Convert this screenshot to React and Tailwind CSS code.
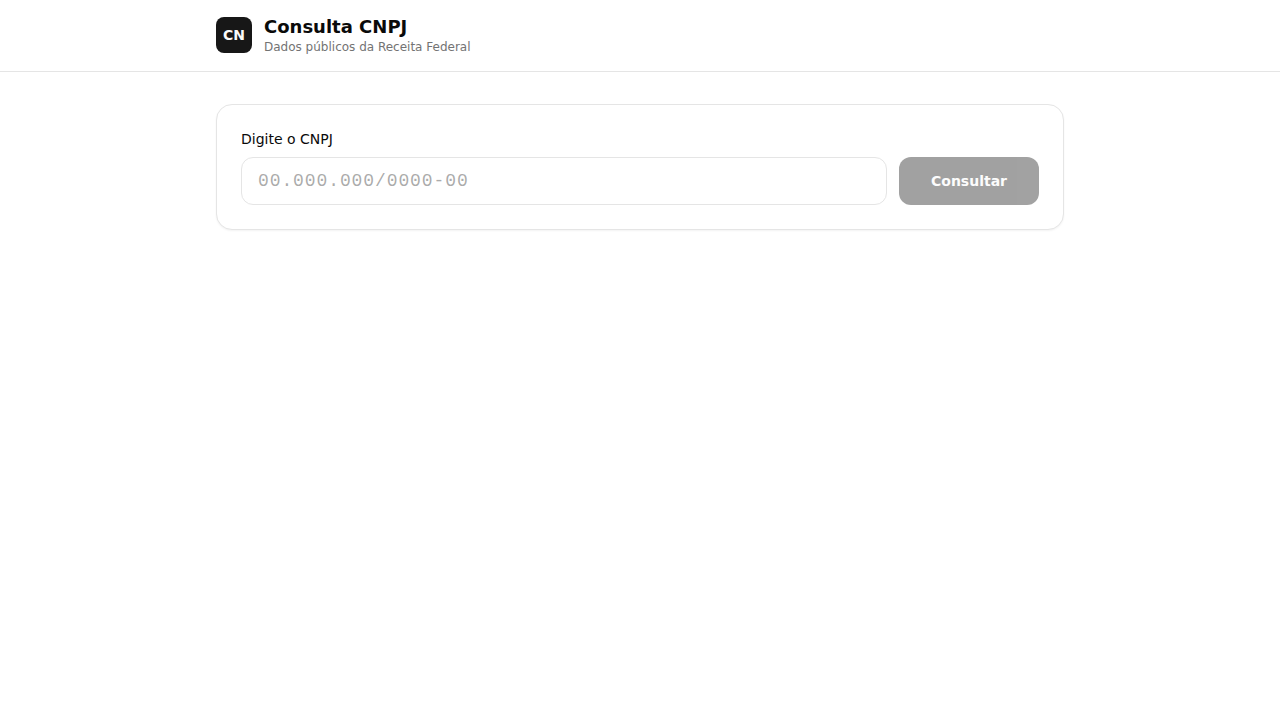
import { useState } from "react";

export default function App() {
  const [cnpj, setCnpj] = useState("");

  return (
    <div className="min-h-screen bg-white font-['DejaVu_Sans',sans-serif] text-neutral-950">
      <header className="border-b border-neutral-200">
        <div className="mx-auto flex max-w-4xl items-center gap-3 px-6 py-4">
          <div className="flex size-9 items-center justify-center rounded-lg bg-neutral-900 text-sm font-bold text-neutral-50">
            CN
          </div>
          <div>
            <h1 className="text-lg leading-tight font-bold">Consulta CNPJ</h1>
            <p className="text-xs text-neutral-500">Dados públicos da Receita Federal</p>
          </div>
        </div>
      </header>
      <main className="mx-auto max-w-4xl px-6 py-8">
        <form
          className="rounded-2xl border border-neutral-200 bg-white p-6 shadow-xs"
          onSubmit={(event) => event.preventDefault()}
        >
          <label htmlFor="cnpj" className="mb-2 block text-sm font-medium">
            Digite o CNPJ
          </label>
          <div className="flex gap-3">
            <input
              id="cnpj"
              type="text"
              inputMode="numeric"
              value={cnpj}
              onChange={(event) => setCnpj(event.target.value)}
              placeholder="00.000.000/0000-00"
              className="h-12 min-w-0 flex-1 rounded-xl border border-neutral-200 bg-white px-4 font-['Liberation_Mono',monospace] text-lg tracking-wider outline-none placeholder:text-neutral-500/60"
            />
            <button
              type="submit"
              disabled={cnpj.length === 0}
              className="h-12 rounded-xl bg-neutral-900 px-8 text-sm font-semibold text-neutral-50 disabled:opacity-40"
            >
              Consultar
            </button>
          </div>
        </form>
      </main>
    </div>
  );
}
